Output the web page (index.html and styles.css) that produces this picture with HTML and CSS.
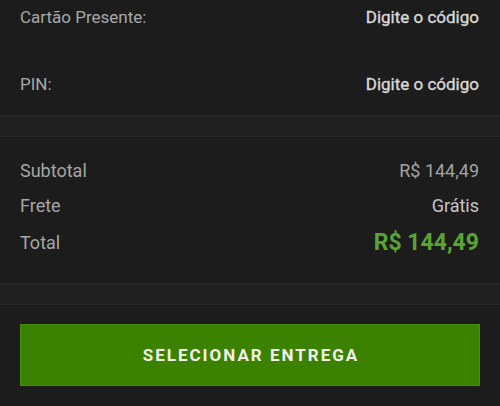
FILE: index.html
```html
<!DOCTYPE html>
<html lang="pt">
<head>
<meta charset="utf-8">
<link rel="stylesheet" href="styles.css">
</head>
<body>
<div class="page">
  <section class="codes">
    <div class="row">
      <span class="label">Cartão Presente:</span>
      <span class="action">Digite o código</span>
    </div>
    <div class="row">
      <span class="label">PIN:</span>
      <span class="action">Digite o código</span>
    </div>
  </section>
  <div class="divider"></div>
  <section class="summary">
    <div class="line">
      <span class="label">Subtotal</span>
      <span class="value">R$ 144,49</span>
    </div>
    <div class="line">
      <span class="label">Frete</span>
      <span class="value light">Grátis</span>
    </div>
    <div class="line total">
      <span class="label">Total</span>
      <span class="amount">R$ 144,49</span>
    </div>
  </section>
  <div class="divider"></div>
  <section class="cta">
    <button class="btn">SELECIONAR ENTREGA</button>
  </section>
</div>
</body>
</html>
```

FILE: styles.css
```css
html, body {
  margin: 0;
  padding: 0;
  background: #1c1c1c;
}
body {
  font-family: Roboto, "Noto Sans", sans-serif;
  width: 500px;
  height: 406px;
  overflow: hidden;
}
.page {
  display: flex;
  flex-direction: column;
}
.codes {
  display: flex;
  flex-direction: column;
  gap: 47px;
  padding: 7px 21px 21px 20px;
}
.row {
  display: flex;
  justify-content: space-between;
  align-items: center;
  height: 20px;
}
.codes .label {
  font-size: 17px;
  color: #a9a9a9;
}
.action {
  font-size: 17px;
  font-weight: 400;
  color: #d8d8d8;
  -webkit-text-stroke: 0.35px #d8d8d8;
}
.divider {
  height: 20px;
  background: #212121;
  border-top: 1px solid #2c2c2c;
  border-bottom: 1px solid #2a2a2a;
  box-shadow: 0 1px 0 #151515;
}
.summary {
  display: flex;
  flex-direction: column;
  gap: 13px;
  padding: 22px 21px 31px 20px;
}
.line {
  display: flex;
  justify-content: space-between;
  align-items: center;
  height: 22px;
}
.summary .label {
  font-size: 18px;
  color: #a6a6a6;
}
.value {
  font-size: 18px;
  color: #a3a3a3;
}
.value.light {
  color: #c4c4c4;
}
.line.total {
  margin-top: 2px;
  margin-bottom: -1px;
}
.amount {
  font-size: 23px;
  font-weight: 700;
  color: #5aa531;
}
.cta {
  padding: 19px 20px 20px 20px;
}
.btn {
  display: block;
  width: 100%;
  height: 62px;
  border: 1px solid #458e12;
  background: #3a8200;
  color: #f2f2ec;
  font-family: Roboto, "Noto Sans", sans-serif;
  font-size: 17px;
  font-weight: 700;
  letter-spacing: 2px;
  padding: 0 0 0 2px;
  cursor: pointer;
}
```
